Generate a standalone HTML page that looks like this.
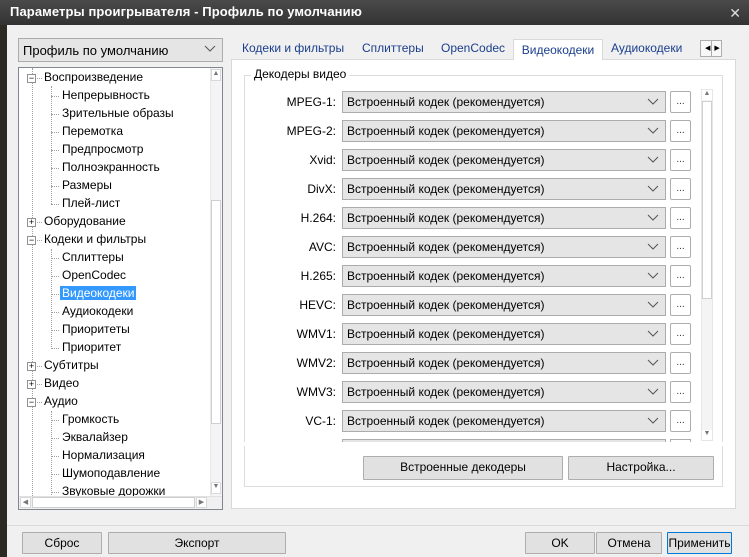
<!DOCTYPE html>
<html><head><meta charset="utf-8"><style>
*{box-sizing:border-box;margin:0;padding:0}
body{width:749px;height:557px;overflow:hidden;background:#f0f0f0;font-family:"Segoe UI","Liberation Sans","DejaVu Sans",sans-serif;font-size:12px;color:#000;position:relative}
.a{position:absolute}
.title{left:0;top:0;width:749px;height:25px;background:linear-gradient(#4a4a4a,#333);color:#fff;font-size:13px;padding:4px 0 0 10px;font-weight:bold;letter-spacing:0.1px}
.lstrip{left:0;top:25px;width:7px;height:532px;background:#2b2b22}
.body{left:7px;top:25px;width:742px;height:532px;background:#f0f0f0}
.combo{background:#e5e5e5;border:1px solid #acacac;height:22px;padding:3px 0 0 4px;white-space:nowrap;overflow:hidden}
.chev{position:absolute;right:6px;top:4px;width:12px;height:10px}
.btn{background:#e1e1e1;border:1px solid #adadad;height:22px;text-align:center;padding-top:3px;border-radius:1px}
.tree{left:18px;top:67px;width:205px;height:443px;background:#fff;border:1px solid #828790;overflow:hidden}
.ti{position:absolute;height:17px;white-space:nowrap;font-size:12px}
.lbl{padding:0 2px}
.sel{background:#3399ff;color:#fff}
.vl{position:absolute;border-left:1px dotted #a0a0a0}
.hl{position:absolute;border-top:1px dotted #a0a0a0;width:8px}
.pm{position:absolute;width:9px;height:9px;border:1px solid #919191;background:#fff;font-size:9px;line-height:7px;text-align:center;color:#000}
.tab{top:39px;height:21px;padding-top:2px;color:#1a3e8c;font-size:12px;white-space:nowrap}
.panel{left:231px;top:59px;width:505px;height:450px;background:#fff;border:1px solid #d9d9d9}
.lab{text-align:right;width:90px;font-size:12px}
.dots{width:21px;height:22px;background:#fff;border:1px solid #adadad;font-size:10px;text-align:center;padding-top:4px;color:#333;border-radius:2px}
</style></head><body>
<div class="a title">Параметры проигрывателя - Профиль по умолчанию</div>
<div class="a" style="right:8px;top:5px;color:#ddd;font-size:14px;font-weight:bold">✕</div>
<div class="a lstrip"></div>
<div class="a body"></div>

<div class="a combo" style="left:18px;top:38px;width:205px;height:24px;padding-top:4px;font-size:13px">Профиль по умолчанию
<svg class="chev" viewBox="0 0 12 10"><path d="M1 3l5 5 5-5" fill="none" stroke="#555" stroke-width="1"/></svg></div>

<div class="a tree">
<div class="vl" style="left:13px;top:0;height:430px"></div>
<div class="vl" style="left:32px;top:18px;height:118px"></div>
<div class="vl" style="left:32px;top:181px;height:100px"></div>
<div class="vl" style="left:32px;top:343px;height:90px"></div>
</div>
<div class="a" style="left:18px;top:67px;width:205px;height:443px;overflow:hidden" id="t">
<!-- items -->
<div class="pm" style="left:9px;top:7px">−</div><div class="hl" style="left:19px;top:11px;width:5px"></div><div class="ti" style="left:24px;top:3px"><span class="lbl">Воспроизведение</span></div>
<div class="hl" style="left:33px;top:29px"></div><div class="ti" style="left:42px;top:21px"><span class="lbl">Непрерывность</span></div>
<div class="hl" style="left:33px;top:47px"></div><div class="ti" style="left:42px;top:39px"><span class="lbl">Зрительные образы</span></div>
<div class="hl" style="left:33px;top:65px"></div><div class="ti" style="left:42px;top:57px"><span class="lbl">Перемотка</span></div>
<div class="hl" style="left:33px;top:83px"></div><div class="ti" style="left:42px;top:75px"><span class="lbl">Предпросмотр</span></div>
<div class="hl" style="left:33px;top:101px"></div><div class="ti" style="left:42px;top:93px"><span class="lbl">Полноэкранность</span></div>
<div class="hl" style="left:33px;top:119px"></div><div class="ti" style="left:42px;top:111px"><span class="lbl">Размеры</span></div>
<div class="hl" style="left:33px;top:137px"></div><div class="ti" style="left:42px;top:129px"><span class="lbl">Плей-лист</span></div>
<div class="pm" style="left:9px;top:151px">+</div><div class="hl" style="left:19px;top:155px;width:5px"></div><div class="ti" style="left:24px;top:147px"><span class="lbl">Оборудование</span></div>
<div class="pm" style="left:9px;top:169px">−</div><div class="hl" style="left:19px;top:173px;width:5px"></div><div class="ti" style="left:24px;top:165px"><span class="lbl">Кодеки и фильтры</span></div>
<div class="hl" style="left:33px;top:191px"></div><div class="ti" style="left:42px;top:183px"><span class="lbl">Сплиттеры</span></div>
<div class="hl" style="left:33px;top:209px"></div><div class="ti" style="left:42px;top:201px"><span class="lbl">OpenCodec</span></div>
<div class="hl" style="left:33px;top:227px"></div><div class="ti" style="left:42px;top:219px"><span class="lbl sel">Видеокодеки</span></div>
<div class="hl" style="left:33px;top:245px"></div><div class="ti" style="left:42px;top:237px"><span class="lbl">Аудиокодеки</span></div>
<div class="hl" style="left:33px;top:263px"></div><div class="ti" style="left:42px;top:255px"><span class="lbl">Приоритеты</span></div>
<div class="hl" style="left:33px;top:281px"></div><div class="ti" style="left:42px;top:273px"><span class="lbl">Приоритет</span></div>
<div class="pm" style="left:9px;top:295px">+</div><div class="hl" style="left:19px;top:299px;width:5px"></div><div class="ti" style="left:24px;top:291px"><span class="lbl">Субтитры</span></div>
<div class="pm" style="left:9px;top:313px">+</div><div class="hl" style="left:19px;top:317px;width:5px"></div><div class="ti" style="left:24px;top:309px"><span class="lbl">Видео</span></div>
<div class="pm" style="left:9px;top:331px">−</div><div class="hl" style="left:19px;top:335px;width:5px"></div><div class="ti" style="left:24px;top:327px"><span class="lbl">Аудио</span></div>
<div class="hl" style="left:33px;top:353px"></div><div class="ti" style="left:42px;top:345px"><span class="lbl">Громкость</span></div>
<div class="hl" style="left:33px;top:371px"></div><div class="ti" style="left:42px;top:363px"><span class="lbl">Эквалайзер</span></div>
<div class="hl" style="left:33px;top:389px"></div><div class="ti" style="left:42px;top:381px"><span class="lbl">Нормализация</span></div>
<div class="hl" style="left:33px;top:407px"></div><div class="ti" style="left:42px;top:399px"><span class="lbl">Шумоподавление</span></div>
<div class="hl" style="left:33px;top:425px"></div><div class="ti" style="left:42px;top:417px"><span class="lbl">Звуковые дорожки</span></div>
<!-- v scroll -->
<div class="a" style="left:192px;top:1px;width:12px;height:428px;background:#f4f4f4;border-left:1px solid #e8e8e8"></div>
<div class="a" style="left:193px;top:2px;width:10px;height:12px;font-size:7px;color:#777;text-align:center;border:1px solid #d8d8d8;background:#fff">▲</div>
<div class="a" style="left:193px;top:133px;width:10px;height:224px;background:#fff;border:1px solid #cfcfcf"></div>
<div class="a" style="left:193px;top:415px;width:10px;height:12px;font-size:7px;color:#777;text-align:center;border:1px solid #d8d8d8;background:#fff">▼</div>
<!-- h scroll -->
<div class="a" style="left:1px;top:429px;width:203px;height:13px;background:#f0f0f0;border-top:1px solid #e0e0e0"></div>
<div class="a" style="left:2px;top:430px;width:11px;height:11px;font-size:7px;color:#777;text-align:center;border:1px solid #d8d8d8;background:#fff">◀</div>
<div class="a" style="left:14px;top:430px;width:163px;height:11px;background:#fff;border:1px solid #cfcfcf"></div>
<div class="a" style="left:178px;top:430px;width:11px;height:11px;font-size:7px;color:#777;text-align:center;border:1px solid #d8d8d8;background:#fff">▶</div>
</div>

<div class="a panel"></div>
<div class="a tab" style="left:242px">Кодеки и фильтры</div>
<div class="a tab" style="left:362px">Сплиттеры</div>
<div class="a tab" style="left:441px">OpenCodec</div>
<div class="a tab" style="left:513px;top:39px;height:21px;width:90px;background:#fff;border:1px solid #d9d9d9;border-bottom:none;text-align:center;padding-top:3px">Видеокодеки</div>
<div class="a tab" style="left:611px">Аудиокодеки</div>
<div class="a" style="left:700px;top:40px;width:22px;height:17px;border:1px solid #adadad;background:#f8f8f8;font-size:7px;padding:3px 0 0 4px;letter-spacing:4px">◀▶</div>
<div class="a" style="left:711px;top:41px;width:1px;height:15px;background:#adadad"></div>

<div class="a" style="left:244px;top:75px;width:479px;height:412px;border:1px solid #dcdcdc"></div>
<div class="a" style="left:251px;top:67px;background:#fff;padding:0 3px;font-size:12px">Декодеры видео</div>

<div id="rows"></div>
<div class="a" style="left:701px;top:89px;width:12px;height:352px;background:#f4f4f4;border:1px solid #e6e6e6"></div>
<div class="a" style="left:702px;top:90px;width:10px;height:10px;font-size:7px;color:#777;text-align:center;background:#fff">▲</div>
<div class="a" style="left:702px;top:101px;width:10px;height:198px;background:#fff;border:1px solid #cfcfcf"></div>
<div class="a" style="left:702px;top:430px;width:10px;height:10px;font-size:7px;color:#777;text-align:center;background:#fff">▼</div>

<div class="a" style="left:342px;top:439px;width:324px;height:3px;border:1px solid #acacac;border-bottom:none;background:#e5e5e5"></div>
<div class="a" style="left:670px;top:439px;width:21px;height:3px;border:1px solid #adadad;border-bottom:none"></div>
<div class="a" style="left:244px;top:442px;width:479px;height:4px;background:#fff"></div>

<div class="a btn" style="left:363px;top:456px;width:200px;height:24px">Встроенные декодеры</div>
<div class="a btn" style="left:568px;top:456px;width:146px;height:24px">Настройка...</div>

<div class="a" style="left:7px;top:525px;width:742px;height:1px;background:#dadada"></div>
<div class="a btn" style="left:22px;top:532px;width:80px;height:22px;font-size:12px">Сброс</div>
<div class="a btn" style="left:108px;top:532px;width:178px;height:22px;font-size:12px">Экспорт</div>
<div class="a btn" style="left:525px;top:532px;width:70px;height:22px;font-size:12px">OK</div>
<div class="a btn" style="left:596px;top:532px;width:66px;height:22px;font-size:12px">Отмена</div>
<div class="a btn" style="left:667px;top:532px;width:65px;height:22px;font-size:12px;border-color:#0078d7">Применить</div>

<div class="a lab" style="left:246px;top:95px">MPEG-1:</div>
<div class="a lab" style="left:246px;top:124px">MPEG-2:</div>
<div class="a lab" style="left:246px;top:153px">Xvid:</div>
<div class="a lab" style="left:246px;top:182px">DivX:</div>
<div class="a lab" style="left:246px;top:211px">H.264:</div>
<div class="a lab" style="left:246px;top:240px">AVC:</div>
<div class="a lab" style="left:246px;top:269px">H.265:</div>
<div class="a lab" style="left:246px;top:298px">HEVC:</div>
<div class="a lab" style="left:246px;top:327px">WMV1:</div>
<div class="a lab" style="left:246px;top:356px">WMV2:</div>
<div class="a lab" style="left:246px;top:385px">WMV3:</div>
<div class="a lab" style="left:246px;top:414px">VC-1:</div>

<div class="a combo" style="left:342px;top:91px;width:324px">Встроенный кодек (рекомендуется)<svg class="chev" viewBox="0 0 12 10"><path d="M1 3l5 5 5-5" fill="none" stroke="#555"/></svg></div><div class="a dots" style="left:670px;top:91px">...</div>
<div class="a combo" style="left:342px;top:120px;width:324px">Встроенный кодек (рекомендуется)<svg class="chev" viewBox="0 0 12 10"><path d="M1 3l5 5 5-5" fill="none" stroke="#555"/></svg></div><div class="a dots" style="left:670px;top:120px">...</div>
<div class="a combo" style="left:342px;top:149px;width:324px">Встроенный кодек (рекомендуется)<svg class="chev" viewBox="0 0 12 10"><path d="M1 3l5 5 5-5" fill="none" stroke="#555"/></svg></div><div class="a dots" style="left:670px;top:149px">...</div>
<div class="a combo" style="left:342px;top:178px;width:324px">Встроенный кодек (рекомендуется)<svg class="chev" viewBox="0 0 12 10"><path d="M1 3l5 5 5-5" fill="none" stroke="#555"/></svg></div><div class="a dots" style="left:670px;top:178px">...</div>
<div class="a combo" style="left:342px;top:207px;width:324px">Встроенный кодек (рекомендуется)<svg class="chev" viewBox="0 0 12 10"><path d="M1 3l5 5 5-5" fill="none" stroke="#555"/></svg></div><div class="a dots" style="left:670px;top:207px">...</div>
<div class="a combo" style="left:342px;top:236px;width:324px">Встроенный кодек (рекомендуется)<svg class="chev" viewBox="0 0 12 10"><path d="M1 3l5 5 5-5" fill="none" stroke="#555"/></svg></div><div class="a dots" style="left:670px;top:236px">...</div>
<div class="a combo" style="left:342px;top:265px;width:324px">Встроенный кодек (рекомендуется)<svg class="chev" viewBox="0 0 12 10"><path d="M1 3l5 5 5-5" fill="none" stroke="#555"/></svg></div><div class="a dots" style="left:670px;top:265px">...</div>
<div class="a combo" style="left:342px;top:294px;width:324px">Встроенный кодек (рекомендуется)<svg class="chev" viewBox="0 0 12 10"><path d="M1 3l5 5 5-5" fill="none" stroke="#555"/></svg></div><div class="a dots" style="left:670px;top:294px">...</div>
<div class="a combo" style="left:342px;top:323px;width:324px">Встроенный кодек (рекомендуется)<svg class="chev" viewBox="0 0 12 10"><path d="M1 3l5 5 5-5" fill="none" stroke="#555"/></svg></div><div class="a dots" style="left:670px;top:323px">...</div>
<div class="a combo" style="left:342px;top:352px;width:324px">Встроенный кодек (рекомендуется)<svg class="chev" viewBox="0 0 12 10"><path d="M1 3l5 5 5-5" fill="none" stroke="#555"/></svg></div><div class="a dots" style="left:670px;top:352px">...</div>
<div class="a combo" style="left:342px;top:381px;width:324px">Встроенный кодек (рекомендуется)<svg class="chev" viewBox="0 0 12 10"><path d="M1 3l5 5 5-5" fill="none" stroke="#555"/></svg></div><div class="a dots" style="left:670px;top:381px">...</div>
<div class="a combo" style="left:342px;top:410px;width:324px">Встроенный кодек (рекомендуется)<svg class="chev" viewBox="0 0 12 10"><path d="M1 3l5 5 5-5" fill="none" stroke="#555"/></svg></div><div class="a dots" style="left:670px;top:410px">...</div>
</body></html>
